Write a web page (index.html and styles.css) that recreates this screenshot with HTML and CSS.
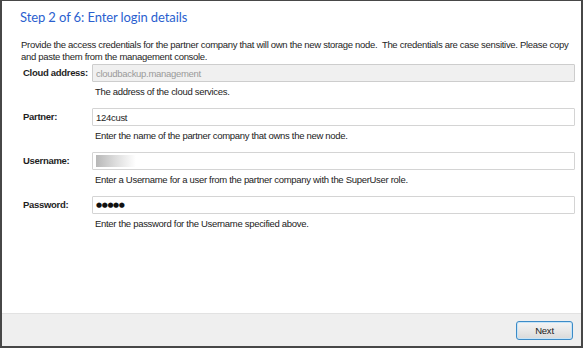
FILE: index.html
```html
<!DOCTYPE html>
<html lang="en">

<head>
	<meta charset="UTF-8">
	<meta name="viewport" content="width=device-width, initial-scale=1.0">
	<title>Step 2 of 6: Enter login details</title>
	<link rel="stylesheet" href="styles.css">
</head>

<body>
	<div class="window">
		<div class="content">
			<h1 class="step-title">Step 2 of 6: Enter login details</h1>
			<p class="intro">Provide the access credentials for the partner company that will own the new storage node.&nbsp; The credentials are case sensitive. Please copy and paste them from the management console.</p>

			<div class="form">
				<label class="field-label" for="cloud">Cloud address:</label>
				<div class="field">
					<input id="cloud" class="text-input" type="text" value="cloudbackup.management" disabled>
					<span class="hint">The address of the cloud services.</span>
				</div>

				<label class="field-label" for="partner">Partner:</label>
				<div class="field">
					<input id="partner" class="text-input" type="text" value="124cust">
					<span class="hint">Enter the name of the partner company that owns the new node.</span>
				</div>

				<label class="field-label">Username:</label>
				<div class="field">
					<div class="text-input fake-input">
						<span class="blurred"></span>
					</div>
					<span class="hint">Enter a Username for a user from the partner company with the SuperUser role.</span>
				</div>

				<label class="field-label">Password:</label>
				<div class="field">
					<div class="text-input fake-input password">&#9679;&#9679;&#9679;&#9679;&#9679;</div>
					<span class="hint">Enter the password for the Username specified above.</span>
				</div>
			</div>
		</div>

		<div class="footer">
			<button class="btn-next" type="button">Next</button>
		</div>
	</div>
</body>

</html>
```

FILE: styles.css
```css
:root {
	--border-dark: #474747;
	--title-color: #2b5fcf;
	--text-color: #1e1e1e;
	--hint-color: #222;
	--input-border: #d4d4d4;
	--footer-bg: #efefef;
}

* {
	box-sizing: border-box;
}

body {
	margin: 0;
	padding: 0;
	font-family: "Liberation Sans", Arial, sans-serif;
	font-size: 9.5px;
	letter-spacing: -0.3px;
	color: var(--text-color);
	background: #fff;
}

.window {
	display: flex;
	flex-direction: column;
	width: 583px;
	height: 348px;
	border-style: solid;
	border-color: var(--border-dark);
	border-width: 1px 2px 2px 2px;
	background: #fff;
}

.content {
	flex: 1;
	padding: 6px 6px 0 18px;
}

.step-title {
	margin: 0;
	font-family: Lato, "Liberation Sans", sans-serif;
	font-size: 13px;
	font-weight: normal;
	letter-spacing: -0.1px;
	line-height: 20px;
	color: var(--title-color);
}

.intro {
	margin: 12px 0 0 1px;
	line-height: 12px;
}

.form {
	display: grid;
	grid-template-columns: 72px 1fr;
	row-gap: 10px;
	margin-top: 1px;
}

.field-label {
	height: 18px;
	line-height: 18px;
	padding-left: 3px;
	font-weight: bold;
	white-space: nowrap;
}

.field {
	display: flex;
	flex-direction: column;
	gap: 3px;
}

.text-input {
	width: 100%;
	height: 18px;
	margin: 0;
	padding: 0 3px;
	border: 1px solid var(--input-border);
	border-radius: 1px;
	font-family: inherit;
	font-size: 9.5px;
	letter-spacing: -0.3px;
	color: var(--text-color);
	background: #fff;
	outline: none;
}

.text-input:disabled {
	color: #9a9a9a;
	background: #f0f0f0;
	border-color: #cdcdcd;
}

.fake-input {
	display: flex;
	align-items: center;
}

.blurred {
	display: block;
	width: 40px;
	height: 12px;
	background: linear-gradient(to right, #b8b8b8, #dedede 50%, #fff);
}

.password {
	font-family: "DejaVu Sans", sans-serif;
	font-size: 7px;
	letter-spacing: -0.4px;
	color: #111;
}

.hint {
	padding-left: 3px;
	line-height: 13px;
	color: var(--hint-color);
}

.footer {
	display: flex;
	justify-content: flex-end;
	align-items: center;
	height: 33px;
	padding-right: 8px;
	background: var(--footer-bg);
	border-top: 1px solid #e2e2e2;
}

.btn-next {
	width: 57px;
	height: 19px;
	padding: 0;
	font-family: inherit;
	font-size: 9.5px;
	letter-spacing: -0.2px;
	color: #1a1a1a;
	border: 1px solid #3c8bc7;
	border-radius: 3px;
	background: linear-gradient(#f4f4f4, #e8e8e8 50%, #d9d9d9);
	box-shadow: inset 0 0 0 1px #c6e4f8;
}
```
